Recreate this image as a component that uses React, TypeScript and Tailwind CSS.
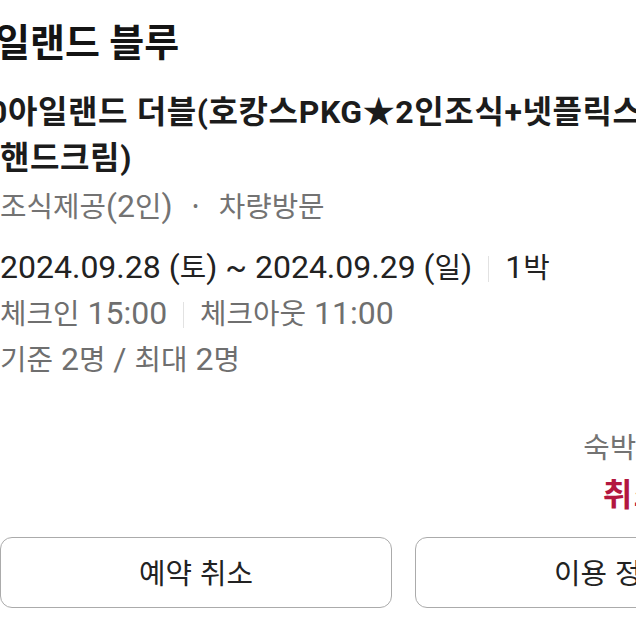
import React from 'react';

const HANGUL = /([\u3131-\u318E\uAC00-\uD7A3]+)/;

const K: React.FC<{ t: string }> = ({ t }) => (
  <>
    {t.split(HANGUL).map((part, i) =>
      i % 2 === 1 ? (
        <span key={i} className="text-[0.9em] leading-none">
          {part}
        </span>
      ) : (
        part
      )
    )}
  </>
);

const Divider = () => <span className="inline-block w-px h-[26px] bg-[#e2e2e2] mx-[16px] align-[-4px]" />;

export default function App() {
  return (
    <div className="w-[636px] h-[636px] overflow-hidden bg-white font-[Roboto,'Noto_Sans_CJK_KR',sans-serif]">
      <div className="w-[807px] pt-[20px]">
        {/* Room type */}
        <h1 className="-ml-[40px] text-[38px] leading-[46px] font-bold text-[#141414] whitespace-nowrap">
          아일랜드 블루
        </h1>

        {/* Product name */}
        <h2 className="mt-[23px] text-[32px] leading-[46px] font-bold tracking-[0.6px] text-[#1c1c1c]">
          <span className="block -ml-[11px] whitespace-nowrap">0아일랜드 더블(호캉스PKG★2인조식+넷플릭스+</span>
          <span className="block whitespace-nowrap">핸드크림)</span>
        </h2>

        <p className="mt-[2px] text-[32px] leading-[46px] text-[#737373] whitespace-nowrap">
          <K t="조식제공(2인)" />
          <span className="mx-[20px] text-[18px] align-[4px]">•</span>
          <K t="차량방문" />
        </p>

        {/* Stay info */}
        <div className="mt-[14px] text-[32px] leading-[46px] whitespace-nowrap">
          <p className="text-[#222]">
            <K t="2024.09.28 (토) ~ 2024.09.29 (일)" />
            <Divider />
            <K t="1박" />
          </p>
          <p className="text-[#6f6f6f]">
            <K t="체크인 15:00" />
            <Divider />
            <K t="체크아웃 11:00" />
          </p>
          <p className="text-[#6f6f6f]">
            <K t="기준 2명 / 최대 2명" />
          </p>
        </div>

        {/* Price / status */}
        <div className="mt-[42px] flex flex-col items-end pr-[40px] text-[32px] leading-[46px] whitespace-nowrap">
          <p className="text-[#737373]">
            <K t="숙박 98,000원" />
          </p>
          <p className="mt-[2px] font-bold tracking-[1.5px] text-[#b3173f]">취소 수수료</p>
        </div>

        {/* Actions */}
        <div className="mt-[19px] grid grid-cols-2 gap-[23px]">
          <button className="h-[71px] rounded-[12px] border-[1.5px] border-[#ababab] bg-white text-[32px] text-[#222]">
            <K t="예약 취소" />
          </button>
          <button className="h-[71px] rounded-[12px] border-[1.5px] border-[#ababab] bg-white text-[32px] text-[#222]">
            <K t="이용 정보" />
          </button>
        </div>
      </div>
    </div>
  );
}
